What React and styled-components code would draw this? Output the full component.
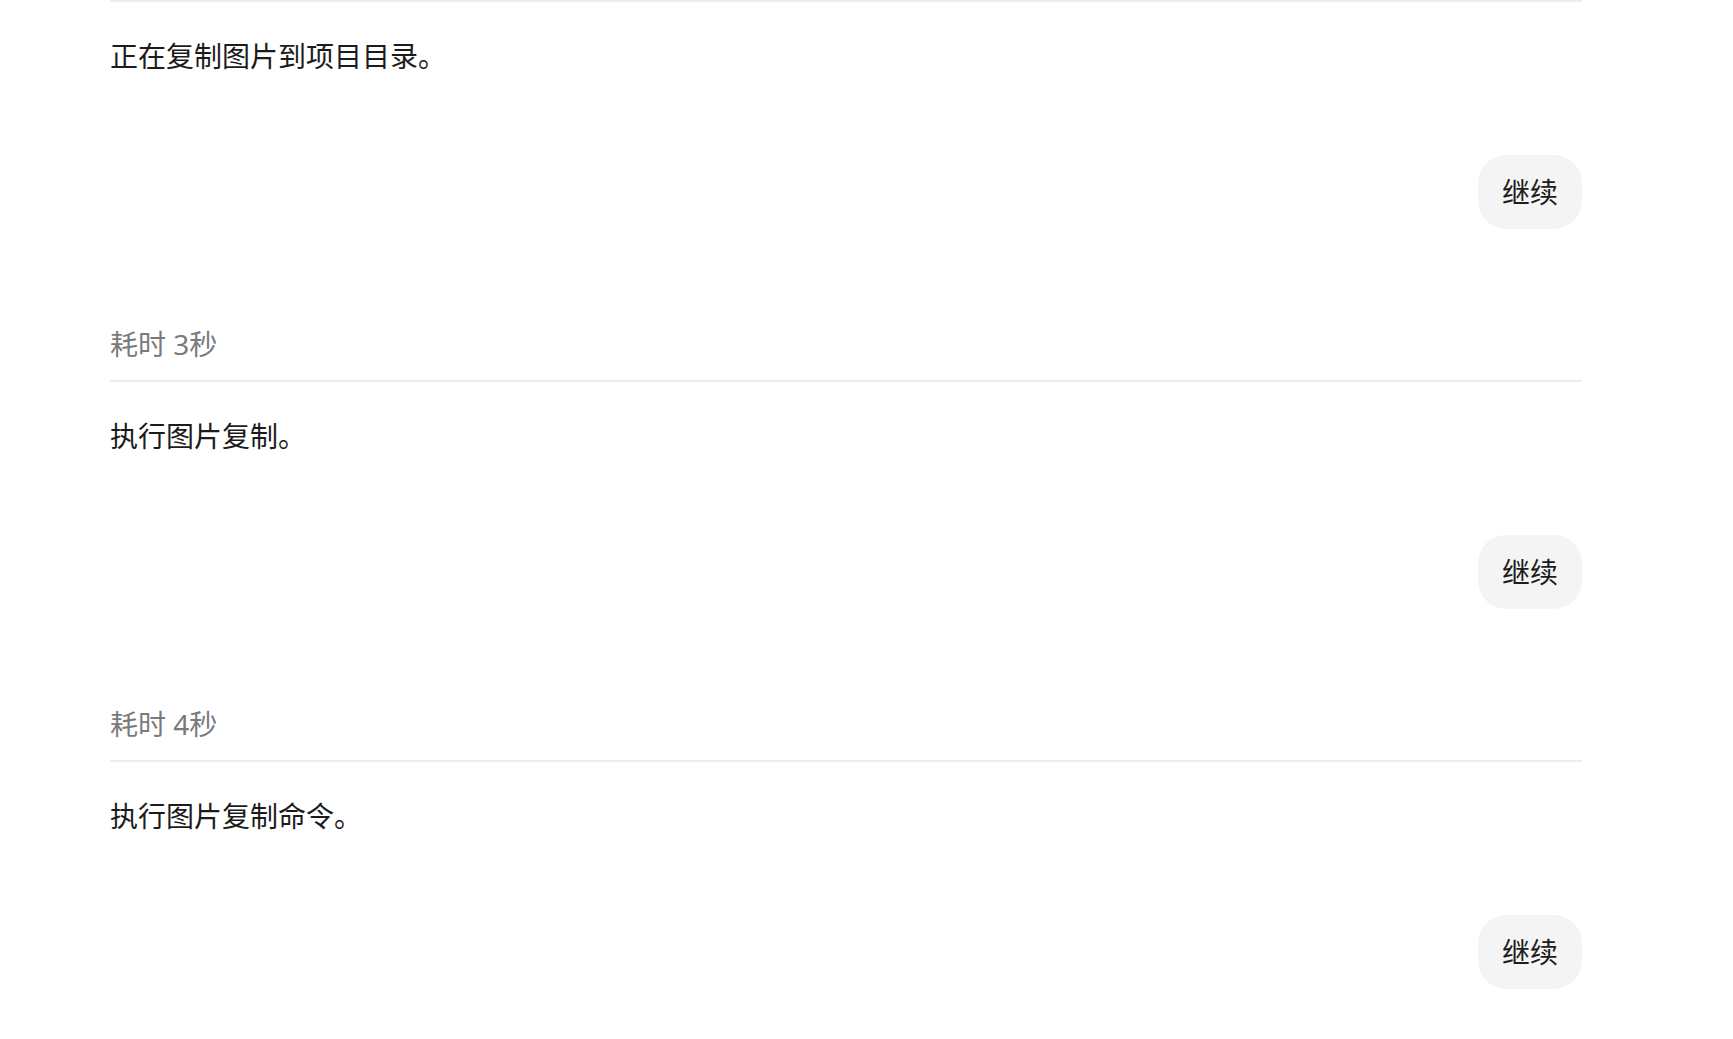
import styled, { createGlobalStyle } from 'styled-components'

const GlobalStyle = createGlobalStyle`
  html, body {
    margin: 0;
    padding: 0;
    background: #ffffff;
  }
  body {
    font-family: "Noto Sans", "Noto Sans CJK SC", sans-serif;
    color: #1f1f1f;
  }
`

const turns = [
  { meta: null, text: '正在复制图片到项目目录。', reply: '继续' },
  { meta: '耗时 3秒', text: '执行图片复制。', reply: '继续' },
  { meta: '耗时 4秒', text: '执行图片复制命令。', reply: '继续' },
]

export default function App() {
  return (
    <>
      <GlobalStyle />
      <Thread>
        {turns.map((turn, i) => (
          <Turn key={i}>
            <Header hasMeta={!!turn.meta}>{turn.meta && <Meta>{turn.meta}</Meta>}</Header>
            <AssistantText>{turn.text}</AssistantText>
            <ReplyRow>
              <Bubble>{turn.reply}</Bubble>
            </ReplyRow>
          </Turn>
        ))}
      </Thread>
    </>
  )
}

const Thread = styled.div`
  width: 1472px;
  margin-left: 110px;
  display: flex;
  flex-direction: column;
`

const Turn = styled.div`
  display: flex;
  flex-direction: column;
`

// elapsed-time label sits above the divider that opens each turn
const Header = styled.div`
  padding-top: ${(props) => (props.hasMeta ? '94px' : '0')};
  padding-bottom: ${(props) => (props.hasMeta ? '15px' : '0')};
  border-bottom: 2px solid #ececec;
`

const Meta = styled.div`
  font-size: 28px;
  line-height: 42px;
  color: #7a7a7a;
`

const AssistantText = styled.div`
  margin-top: 33px;
  font-size: 28px;
  line-height: 42px;
  color: #1c1c1c;
`

const ReplyRow = styled.div`
  display: flex;
  justify-content: flex-end;
  margin-top: 78px;
`

const Bubble = styled.div`
  background: #f4f4f4;
  border-radius: 28px;
  padding: 16px 24px;
  font-size: 28px;
  line-height: 42px;
  color: #1c1c1c;
`
